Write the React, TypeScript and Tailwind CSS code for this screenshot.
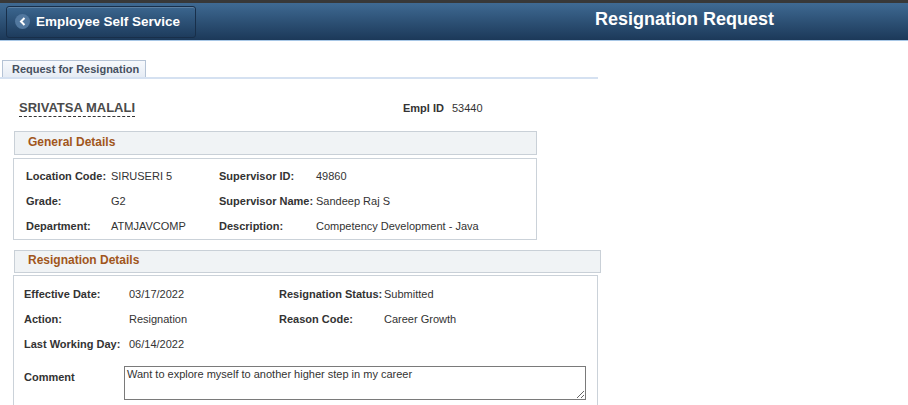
import React from "react";

type Field = { label: string; value: string };

const general: [Field, Field][] = [
    [
        { label: "Location Code:", value: "SIRUSERI 5" },
        { label: "Supervisor ID:", value: "49860" },
    ],
    [
        { label: "Grade:", value: "G2" },
        { label: "Supervisor Name:", value: "Sandeep Raj S" },
    ],
    [
        { label: "Department:", value: "ATMJAVCOMP" },
        { label: "Description:", value: "Competency Development - Java" },
    ],
];

const resignation: [Field, Field | null][] = [
    [
        { label: "Effective Date:", value: "03/17/2022" },
        { label: "Resignation Status:", value: "Submitted" },
    ],
    [
        { label: "Action:", value: "Resignation" },
        { label: "Reason Code:", value: "Career Growth" },
    ],
    [{ label: "Last Working Day:", value: "06/14/2022" }, null],
];

export default function App() {
    return (
        <div className="w-[908px] h-[405px] overflow-hidden bg-white font-['Liberation_Sans',Arial,sans-serif] text-[#333]">
            <Header />
            <div className="pt-[19px] w-[598px]">
                <div className="border-b-2 border-[#d5e1f1]">
                    <div className="ml-[2px] w-[144px] h-[17px] border border-b-0 border-[#b5c3d5] bg-gradient-to-b from-[#f7f9fc] to-[#e6ecf4] pl-[9px] text-[11px] font-bold leading-[16px] text-[#46505f]">
                        Request for Resignation
                    </div>
                </div>
            </div>

            <div className="mt-[21px] h-[17px] pl-[19px] flex items-start">
                <div className="w-[384px] flex">
                    <span className="text-[13px] font-bold leading-[16px] text-[#4a4a4a] border-b border-dashed border-[#333]">
                        SRIVATSA MALALI
                    </span>
                </div>
                <div className="flex gap-[8px] text-[11px] leading-[16px]">
                    <span className="font-bold">Empl ID</span>
                    <span>53440</span>
                </div>
            </div>

            <SectionHeader title="General Details" className="mt-[14px] w-[523px] h-[24px]" />
            <div className="mt-[3px] ml-[13px] w-[524px] border border-[#cbd2d9] pt-[5px] pl-[12px]">
                {general.map(([a, b]) => (
                    <div key={a.label} className="h-[25px] flex items-center text-[11px]">
                        <span className="w-[85px] font-bold">{a.label}</span>
                        <span className="w-[108px]">{a.value}</span>
                        <span className="w-[97px] font-bold">{b.label}</span>
                        <span>{b.value}</span>
                    </div>
                ))}
            </div>

            <SectionHeader title="Resignation Details" className="mt-[10px] w-[587px] h-[23px]" />
            <div className="mt-[2px] ml-[13px] w-[585px] h-[140px] border border-[#cbd2d9] pt-[6px] pl-[10px]">
                {resignation.map(([a, b]) => (
                    <div key={a.label} className="h-[25px] flex items-center text-[11px]">
                        <span className="w-[105px] font-bold">{a.label}</span>
                        <span className="w-[150px]">{a.value}</span>
                        {b && (
                            <>
                                <span className="w-[105px] font-bold">{b.label}</span>
                                <span>{b.value}</span>
                            </>
                        )}
                    </div>
                ))}
                <div className="mt-[9px] flex items-start text-[11px]">
                    <span className="w-[100px] pt-[4px] font-bold leading-[14px]">Comment</span>
                    <textarea
                        readOnly
                        defaultValue="Want to explore myself to another higher step in my career"
                        className="w-[462px] h-[34px] border border-[#7a7a7a] px-[2px] py-[1px] text-[11px] leading-[13px] text-[#333] outline-none"
                    />
                </div>
            </div>
        </div>
    );
}

function Header() {
    return (
        <div className="h-[41px] border-t-[3px] border-t-[#383838] border-b border-b-[#a8c7e6] bg-gradient-to-b from-[#3f6a93] to-[#1c3959] flex items-center">
            <button className="ml-[6px] h-[32px] w-[190px] rounded-[3px] border border-[#182f4a] shadow-[inset_0_1px_0_rgba(255,255,255,0.18)] bg-gradient-to-b from-[#3b668f] to-[#1e3c5d] flex items-center pl-[8px] gap-[6px]">
                <span className="w-[15px] h-[15px] rounded-full bg-[#52789f] flex items-center justify-center">
                    <svg width="8" height="9" viewBox="0 0 8 9">
                        <polyline points="5.5,1 2,4.5 5.5,8" fill="none" stroke="white" strokeWidth="2" />
                    </svg>
                </span>
                <span className="text-[13.5px] font-bold text-white leading-none">Employee Self Service</span>
            </button>
            <h1 className="ml-[399px] -mt-[5px] text-[18px] font-bold text-white leading-none">
                Resignation Request
            </h1>
        </div>
    );
}

function SectionHeader({ title, className }: { title: string; className: string }) {
    return (
        <div className={`ml-[14px] border border-[#c9d0d7] bg-[#f0f3f5] pl-[13px] flex items-center ${className}`}>
            <span className="-mt-[3px] text-[12px] font-bold text-[#a1561c] leading-none">{title}</span>
        </div>
    );
}
